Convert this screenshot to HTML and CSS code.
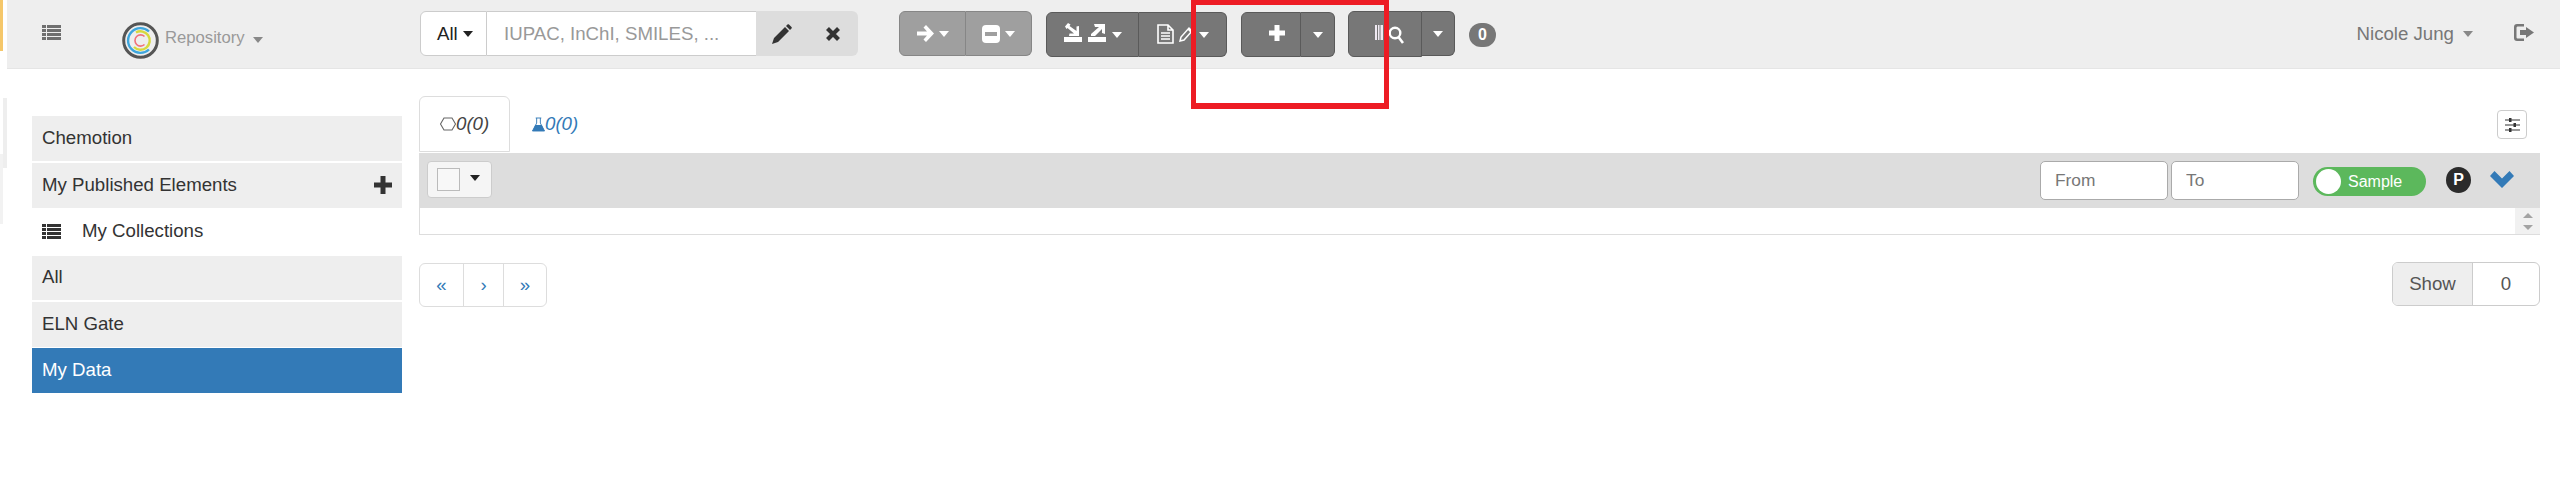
FILE: index.html
```html
<!DOCTYPE html>
<html>
    <head lang="en">
        <meta charset="UTF-8">
        <title>Chemotion Repository</title>
        <link rel="stylesheet" href="styles.css">
    </head>
    <body>
        <span class="edge edge-yellow"></span>
        <span class="edge edge-a"></span>
        <span class="edge edge-b"></span>

        <div class="navbar">
            <svg class="nav-list" width="19" height="15" viewBox="0 0 19 15"><path d="M0 0h4v3H0zM5 0h14v3H5zM0 4h4v3H0zM5 4h14v3H5zM0 8h4v3H0zM5 8h14v3H5zM0 12h4v3H0zM5 12h14v3H5z"/></svg>
            <div class="brand">
                <svg width="37" height="37" viewBox="0 0 37 37" fill="none">
                    <circle cx="18.5" cy="18.5" r="16.8" stroke="#555" stroke-width="3"/>
                    <path d="M27 9.5A12.4 12.4 0 1 0 27 27.5" stroke="#3ea6dd" stroke-width="2.4"/>
                    <path d="M14 10.5A9.2 9.2 0 1 1 12 25" stroke="#d6d93e" stroke-width="2.4"/>
                    <path d="M22.5 14.5A5.6 5.6 0 1 0 22.5 22.5" stroke="#f0727a" stroke-width="1.6"/>
                </svg>
                <span class="brand-name">Repository</span>
                <span class="caret caret-grey"></span>
            </div>

            <div class="search">
                <div class="search-scope">All <span class="caret caret-dark"></span></div>
                <input class="search-input" type="text" placeholder="IUPAC, InChI, SMILES, ...">
                <div class="search-btn">
                    <svg width="20" height="20" viewBox="0 0 20 20" fill="#333"><path d="M0 20l2-6L13 3l4 4L6 18zM14 2l1.500-1.500c.5-.5 1-.5 1.500 0l2.500 2.500c.5.5.5 1 0 1.500L18 6z"/></svg>
                </div>
                <div class="search-btn">
                    <svg width="14" height="14" viewBox="0 0 14 14" stroke="#333" stroke-width="4.200"><path d="M1.500 1.500l11 11M12.500 1.500l-11 11"/></svg>
                </div>
            </div>

            <div class="btn-group muted group-split">
                <div class="btn w67">
                    <svg width="17" height="17" viewBox="0 0 17 17" fill="#fff"><path d="M9 0l8 8.500L9 17l-2.500-2.500L10 10.500H0v-4h10L6.500 2.500z"/></svg>
                    <span class="caret"></span>
                </div>
                <div class="btn w66">
                    <svg width="18" height="18" viewBox="0 0 18 18"><rect width="18" height="18" rx="4" fill="#fff"/><rect x="3" y="7" width="12" height="4" fill="#9f9f9f"/></svg>
                    <span class="caret"></span>
                </div>
            </div>

            <div class="btn-group group-move">
                <div class="btn w93 btn-up">
                    <svg class="tray" width="18" height="19" viewBox="0 0 18 19" fill="#fff"><path d="M0 14h18v5H0zM4 0l2.500 1.500L5.500 3l7 5V3.500L15 3v10H5l.5-2.500H10L3.500 5 2.500 6 1 3.500z"/></svg>
                    <svg class="tray" width="18" height="19" viewBox="0 0 18 19" fill="#fff"><path d="M0 14h18v5H0zM6 1h11v10l-3-1V6l-7 7H3v-2l8-7H7z"/></svg>
                    <span class="caret"></span>
                </div>
                <div class="btn w88 btn-doc">
                    <svg width="17" height="20" viewBox="0 0 17 20" fill="none" stroke="#fff" stroke-width="1.600"><path d="M1 1h10l5 5v13H1zM11 1v5h5M4 9h9M4 12h9M4 15h9"/></svg>
                    <svg width="15" height="16" viewBox="0 0 15 16" fill="none" stroke="#fff" stroke-width="1.500"><path d="M1 15l1-4 8-9 3 3-8 9zM9 3l3 3"/></svg>
                    <span class="caret"></span>
                </div>
            </div>

            <div class="btn-group group-add">
                <div class="btn w60 btn-plus">
                    <svg width="16" height="16" viewBox="0 0 16 16" fill="#fff"><path d="M5.500 0h5v5.500H16v5h-5.500V16h-5v-5.500H0v-5h5.500z"/></svg>
                </div>
                <div class="btn w34"><span class="caret"></span></div>
            </div>

            <div class="btn-group group-scan">
                <div class="btn w74 btn-scan">
                    <svg width="29" height="19" viewBox="0 0 29 19"><path d="M0 0h2v15H0zM3 0h1.500v15H3zM5.500 0h2.500v15H5.500zM9 0h1v15H9zM11 0h1.500v15H11z" fill="#efe9f2"/><circle cx="20" cy="8" r="5.300" fill="none" stroke="#fff" stroke-width="2.400"/><path d="M23.500 12l4.500 6" stroke="#fff" stroke-width="2.600"/></svg>
                </div>
                <div class="btn w33"><span class="caret"></span></div>
            </div>

            <span class="badge">0</span>

            <div class="user">Nicole Jung <span class="caret caret-grey"></span></div>
            <svg class="logout" width="20" height="17" viewBox="0 0 20 17" fill="#777"><path d="M3 0h7v2.500H4c-1 0-1.500.5-1.500 1.500v9c0 1 .5 1.500 1.500 1.500h6V17H3c-2 0-3-1-3-3V3c0-2 1-3 3-3zM12 3l8 5.500-8 5.500v-3H6V6h6z"/></svg>
        </div>

        <div class="page">
            <div class="sidebar">
                <div class="side-row">Chemotion</div>
                <div class="side-row mt2 side-plus">
                    My Published Elements
                    <svg width="18" height="18" viewBox="0 0 18 18" fill="#333"><path d="M6.500 0h5v6.500H18v5h-6.500V18h-5v-6.500H0v-5h6.500z"/></svg>
                </div>
                <div class="side-title">
                    <svg width="19" height="15" viewBox="0 0 19 15" fill="#333"><path d="M0 0h4v3H0zM5 0h14v3H5zM0 4h4v3H0zM5 4h14v3H5zM0 8h4v3H0zM5 8h14v3H5zM0 12h4v3H0zM5 12h14v3H5z"/></svg>
                    My Collections
                </div>
                <div class="side-row short">All</div>
                <div class="side-row mt2">ELN Gate</div>
                <div class="side-row mt1 active">My Data</div>
            </div>

            <div class="main">
                <div class="tabs-row">
                    <div class="tabs">
                        <div class="tab selected">
                            <svg width="16" height="14" viewBox="0 0 16 14" fill="none" stroke="#666" stroke-width="1.100"><path d="M4 1h8l3.500 6L12 13H4L.5 7z"/></svg>
                            <i>0(0)</i>
                        </div>
                        <div class="tab">
                            <svg width="13" height="15" viewBox="0 0 14 15"><path d="M4 .5h6M5 .5V6L.5 14.500h13L9 6V.5" fill="none" stroke="#337ab7"/><path d="M3.500 8h7l3 6.500H.5z" fill="#337ab7"/></svg>
                            <i>0(0)</i>
                        </div>
                    </div>
                    <div class="settings">
                        <svg width="15" height="14" viewBox="0 0 15 14" fill="#333"><path d="M0 1.500h15v1H0zM0 6.500h15v1H0zM0 11.500h15v1H0z"/><path d="M4 0h2.500v4H4zM8.500 5H11v4H8.500zM4 10h2.500v4H4z"/></svg>
                    </div>
                </div>

                <div class="toolbar">
                    <div class="check-btn"><span class="check-box"></span><span class="caret caret-dark"></span></div>
                    <input class="date-input" type="text" placeholder="From">
                    <input class="date-input date-to" type="text" placeholder="To">
                    <div class="toggle"><span class="knob"></span>Sample</div>
                    <span class="round-p">P</span>
                    <svg class="chevron" width="24" height="17" viewBox="0 0 24 17" fill="#337ab7"><path d="M0 5l4.500-5L12 7.500 19.500 0 24 5 12 17z"/></svg>
                </div>

                <div class="list-box">
                    <div class="scroll">
                        <span class="scroll-up"></span>
                        <span class="scroll-down"></span>
                    </div>
                </div>

                <div class="foot-row">
                    <div class="pager">
                        <span class="page-a">«</span>
                        <span class="page-b">›</span>
                        <span class="page-c">»</span>
                    </div>
                    <div class="show">
                        <span class="show-label">Show</span>
                        <span class="show-num">0</span>
                    </div>
                </div>
            </div>
        </div>

        <div class="red-box"></div>
    </body>
</html>
```

FILE: styles.css
```css
*{
    margin:0;
    padding:0;
    box-sizing:border-box;
}
body{
    font-family:"Liberation Sans",Arial,sans-serif;
    font-size:18.67px;
    color:#333;
    background:#fff;
    overflow:hidden;
}
input{
    font-family:inherit;
    outline:none;
}

/* screenshot edge leftovers and the annotation */
.edge{
    position:absolute;
    left:0;
}
.edge-yellow{
    top:0;
    width:3px;
    height:51px;
    background:#f5c76a;
}
.edge-a{
    top:98px;
    left:3px;
    width:4px;
    height:70px;
    background:#eee;
}
.edge-b{
    top:154px;
    width:3px;
    height:70px;
    background:#f2f2f2;
}
.red-box{
    position:absolute;
    left:1191px;
    top:0;
    width:198px;
    height:109px;
    border:5px solid #ed1c24;
    border-bottom-width:6px;
}

/* navbar */
.navbar{
    display:flex;
    align-items:center;
    height:69px;
    margin-left:7px;
    padding-right:26px;
    padding-bottom:1px;
    background:#eee;
    border-bottom:1px solid #e5e5e5;
}
.nav-list{
    margin-left:35px;
    margin-bottom:2px;
    fill:#6f6f6f;
    flex:none;
}
.brand{
    display:flex;
    align-items:center;
    flex:none;
    width:142px;
    margin-left:61px;
    margin-top:13px;
    color:#999;
    font-size:16.67px;
}
.brand-name{
    margin-left:6px;
    margin-right:8px;
    margin-bottom:4px;
}
.caret{
    display:inline-block;
    flex:none;
    width:0;
    height:0;
    border-top:6px solid #fff;
    border-left:5.500px solid transparent;
    border-right:5.500px solid transparent;
}
.caret-grey{
    border-top-color:#888;
}
.caret-dark{
    border-top-color:#222;
}

/* search */
.search{
    display:flex;
    height:45px;
    margin-left:156px;
    flex:none;
}
.search-scope{
    display:flex;
    align-items:center;
    gap:5px;
    width:67px;
    padding-left:16px;
    background:#fff;
    color:#222;
    border:1px solid #ccc;
    border-right:1px solid #ccc;
    border-radius:6px 0 0 6px;
}
.search-input{
    width:269px;
    padding-left:17px;
    font-size:18.67px;
    background:#fff;
    border:none;
    border-top:1px solid #ccc;
    border-bottom:1px solid #ccc;
}
.search-input::placeholder{
    color:#999;
    opacity:1;
}
.search-btn{
    display:flex;
    align-items:center;
    justify-content:center;
    width:51px;
    background:#ddd;
}
.search-btn:last-child{
    border-radius:0 6px 6px 0;
}

/* button groups */
.btn-group{
    display:flex;
    align-items:flex-start;
    flex:none;
}
.group-split{
    margin-left:41px;
}
.group-move{
    margin-left:14px;
    margin-top:2px;
}
.group-add{
    margin-left:14px;
    margin-top:2px;
}
.group-scan{
    margin-left:13px;
    margin-top:1px;
}
.btn{
    display:flex;
    align-items:center;
    justify-content:center;
    gap:5px;
    height:45px;
    background:#777;
    border:1.300px solid #5a5a5a;
}
.btn-up{
    padding-bottom:5px;
}
.btn-up .caret{
    margin-top:5px;
}
.btn-doc{
    padding-bottom:2px;
}
.btn-doc .caret{
    margin-top:2px;
}
.btn:first-child{
    border-radius:6px 0 0 6px;
}
.btn:last-child{
    border-radius:0 6px 6px 0;
}
.btn + .btn{
    border-left:0;
}
.muted .btn{
    background:#9f9f9f;
    border-color:#868686;
}
.w33{ width:33px; }
.w34{ width:34px; }
.w60{ width:60px; }
.w66{ width:66px; }
.w67{ width:67px; }
.w74{ width:74px; }
.w88{ width:88px; }
.w93{ width:93px; }
.btn-plus{
    padding-left:12px;
    padding-bottom:3px;
}
.btn-scan{
    height:46px;
    padding-left:8px;
}
.tray{
    margin-right:1px;
}
.badge{
    display:block;
    flex:none;
    width:27px;
    height:24px;
    margin-left:14px;
    margin-top:3px;
    line-height:24px;
    text-align:center;
    font-size:16px;
    font-weight:bold;
    color:#fff;
    background:#777;
    border-radius:12px;
}
.user{
    display:flex;
    align-items:center;
    gap:9px;
    margin-left:auto;
    color:#777;
}
.logout{
    margin-left:41px;
    margin-bottom:2px;
    flex:none;
}

/* page */
.page{
    display:flex;
    padding-left:32px;
    padding-right:20px;
}
.sidebar{
    width:370px;
    margin-top:47px;
    flex:none;
}
.side-row{
    display:flex;
    align-items:center;
    height:45px;
    padding:0 10px 2px;
    background:#eee;
}
.short{
    height:44px;
}
.mt1{
    margin-top:1px;
}
.mt2{
    margin-top:2px;
}
.side-plus{
    justify-content:space-between;
}
.side-title{
    display:flex;
    align-items:center;
    gap:21px;
    height:48px;
    padding-left:10px;
    padding-bottom:2px;
}
.active{
    background:#337ab7;
    color:#fff;
}
.main{
    flex:1;
    margin-left:17px;
    margin-top:27px;
}
.tabs-row{
    display:flex;
    justify-content:space-between;
    height:57px;
}
.tabs{
    display:flex;
}
.tab{
    display:flex;
    align-items:center;
    height:56px;
    padding:0 21px;
    color:#337ab7;
    border:1px solid transparent;
}
.tab svg{
    flex:none;
}
.tab.selected{
    width:91px;
    padding-left:20px;
    color:#444;
    border-color:#ddd;
    border-radius:6px 6px 0 0;
}
.settings{
    display:flex;
    align-items:center;
    justify-content:center;
    width:30px;
    height:29px;
    margin-top:14px;
    margin-right:13px;
    border:1px solid #ccc;
    border-radius:4px;
}
.toolbar{
    display:flex;
    align-items:flex-start;
    height:55px;
    padding-left:8px;
    padding-top:8px;
    background:#ddd;
}
.check-btn{
    display:flex;
    align-items:center;
    width:65px;
    height:37px;
    margin-right:auto;
    padding-left:9px;
    background:#f5f5f5;
    border:1px solid #ccc;
    border-radius:4px;
}
.check-box{
    width:23px;
    height:23px;
    margin-right:10px;
    background:#f8f8f8;
    border:1px solid #bbb;
}
.check-btn .caret{
    margin-bottom:4px;
}
.date-input{
    width:128px;
    height:39px;
    padding-left:14px;
    font-size:17.33px;
    background:#fff;
    border:1px solid #aaa;
    border-radius:5px;
}
.date-input::placeholder{
    color:#777;
    opacity:1;
}
.date-to{
    margin-left:3px;
}
.toggle{
    display:flex;
    align-items:center;
    width:113px;
    height:29px;
    margin-left:14px;
    margin-top:6px;
    padding-left:3px;
    font-size:16px;
    color:#fff;
    background:#5cb85c;
    border-radius:15px;
}
.knob{
    width:25px;
    height:25px;
    margin-right:7px;
    background:#fff;
    border-radius:50%;
}
.round-p{
    width:25px;
    height:26px;
    margin-left:20px;
    margin-top:6px;
    line-height:26px;
    text-align:center;
    font-size:16px;
    font-weight:bold;
    color:#fff;
    background:#2b2b2b;
    border-radius:50%;
}
.chevron{
    margin-left:19px;
    margin-right:26px;
    margin-top:10px;
    flex:none;
}
.list-box{
    display:flex;
    justify-content:flex-end;
    height:27px;
    border-left:1px solid #ddd;
    border-bottom:1px solid #ddd;
}
.scroll{
    display:flex;
    flex-direction:column;
    align-items:center;
    gap:7px;
    width:25px;
    padding-top:5px;
    background:#f1f1f1;
}
.scroll-up{
    width:0;
    height:0;
    border-bottom:5px solid #a3a3a3;
    border-left:5px solid transparent;
    border-right:5px solid transparent;
}
.scroll-down{
    width:0;
    height:0;
    border-top:5px solid #a3a3a3;
    border-left:5px solid transparent;
    border-right:5px solid transparent;
}
.foot-row{
    display:flex;
    justify-content:space-between;
    align-items:flex-start;
    margin-top:27px;
}
.pager{
    display:flex;
    height:44px;
    margin-top:1px;
    color:#337ab7;
    border:1px solid #ddd;
    border-radius:6px;
}
.pager span{
    display:flex;
    align-items:center;
    justify-content:center;
}
.page-a{
    width:44px;
    border-right:1px solid #ddd;
}
.page-b{
    width:40px;
    border-right:1px solid #ddd;
}
.page-c{
    width:42px;
}
.show{
    display:flex;
    height:44px;
    line-height:42px;
    text-align:center;
    border:1px solid #ccc;
    border-radius:6px;
    color:#555;
}
.show-label{
    width:80px;
    background:#eee;
    border-right:1px solid #ccc;
    border-radius:5px 0 0 5px;
}
.show-num{
    width:66px;
}
```
